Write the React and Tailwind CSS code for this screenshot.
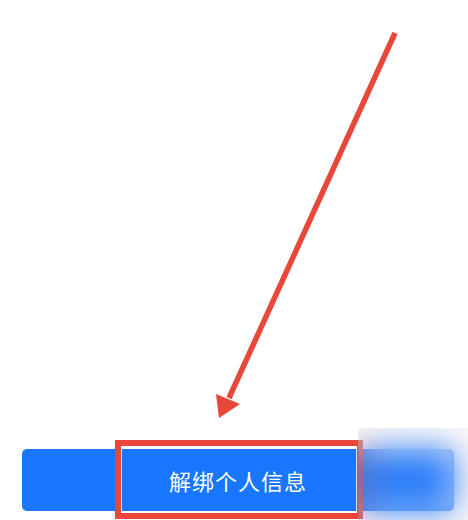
export default function App() {
  return (
    <div className="relative w-[468px] h-[520px] bg-white overflow-hidden flex flex-col justify-end" style={{ fontFamily: '"Noto Sans CJK SC", "Noto Sans", sans-serif' }}>
      <div className="pl-[22px] pb-[9px]">
        <button className="w-[432px] h-[62px] rounded-[5px] bg-[#1877fe] text-white text-[22px] tracking-[1px] flex items-center justify-center">
          解绑个人信息
        </button>
      </div>
      {/* annotation rectangle */}
      <div className="absolute left-[115px] top-[440px] w-[248px] h-[79px] border-[6px] border-[#e8473a] pointer-events-none">
        <div className="w-full h-full border border-white/80"></div>
      </div>
      {/* arrow */}
      <svg className="absolute left-0 top-0 pointer-events-none" width="468" height="520" viewBox="0 0 468 520">
        <line x1="395" y1="33" x2="229" y2="398" stroke="#e8473a" strokeWidth="5.5" />
        <polygon points="219,418 216,394 240,404" fill="#e8473a" />
      </svg>
      {/* blurred watermark area */}
      <div className="absolute left-[358px] top-[428px] w-[110px] h-[92px] backdrop-blur-lg bg-[#d8b8c8]/10"></div>
    </div>
  );
}
